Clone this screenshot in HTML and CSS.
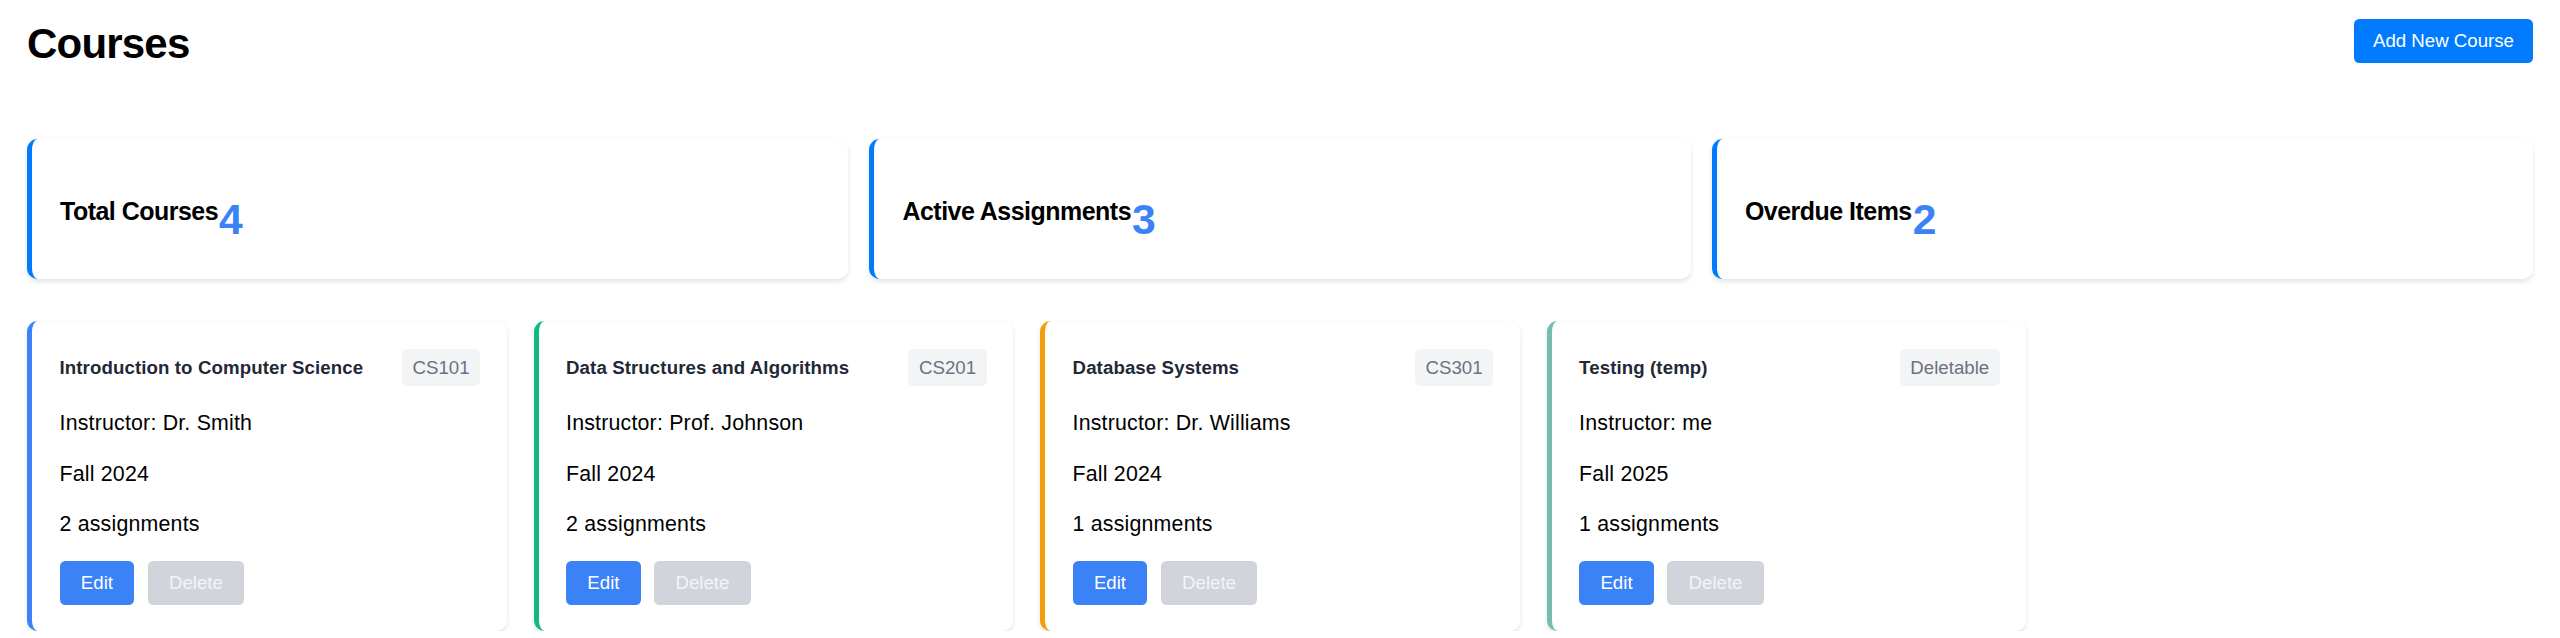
FILE: index.html
```html
<!DOCTYPE html>
<html lang="en">
<head>
<meta charset="utf-8">
<title>Courses</title>
<link rel="stylesheet" href="styles.css">
</head>
<body>
<div class="page">
  <header class="page-header">
    <h1 class="page-title">Courses</h1>
    <button class="btn-primary">Add New Course</button>
  </header>

  <section class="stats">
    <div class="stat-card">
      <h3 class="stat-label">Total Courses</h3>
      <p class="stat-value">4</p>
    </div>
    <div class="stat-card">
      <h3 class="stat-label">Active Assignments</h3>
      <p class="stat-value">3</p>
    </div>
    <div class="stat-card">
      <h3 class="stat-label">Overdue Items</h3>
      <p class="stat-value">2</p>
    </div>
  </section>

  <section class="course-grid">
    <article class="course-card accent-blue">
      <div class="course-head">
        <h4 class="course-title">Introduction to Computer Science</h4>
        <span class="course-code">CS101</span>
      </div>
      <p class="course-line">Instructor: Dr. Smith</p>
      <p class="course-line">Fall 2024</p>
      <p class="course-line">2 assignments</p>
      <div class="course-actions">
        <button class="btn-edit">Edit</button>
        <button class="btn-delete" disabled>Delete</button>
      </div>
    </article>

    <article class="course-card accent-green">
      <div class="course-head">
        <h4 class="course-title">Data Structures and Algorithms</h4>
        <span class="course-code">CS201</span>
      </div>
      <p class="course-line">Instructor: Prof. Johnson</p>
      <p class="course-line">Fall 2024</p>
      <p class="course-line">2 assignments</p>
      <div class="course-actions">
        <button class="btn-edit">Edit</button>
        <button class="btn-delete" disabled>Delete</button>
      </div>
    </article>

    <article class="course-card accent-amber">
      <div class="course-head">
        <h4 class="course-title">Database Systems</h4>
        <span class="course-code">CS301</span>
      </div>
      <p class="course-line">Instructor: Dr. Williams</p>
      <p class="course-line">Fall 2024</p>
      <p class="course-line">1 assignments</p>
      <div class="course-actions">
        <button class="btn-edit">Edit</button>
        <button class="btn-delete" disabled>Delete</button>
      </div>
    </article>

    <article class="course-card accent-teal">
      <div class="course-head">
        <h4 class="course-title">Testing (temp)</h4>
        <span class="course-code">Deletable</span>
      </div>
      <p class="course-line">Instructor: me</p>
      <p class="course-line">Fall 2025</p>
      <p class="course-line">1 assignments</p>
      <div class="course-actions">
        <button class="btn-edit">Edit</button>
        <button class="btn-delete" disabled>Delete</button>
      </div>
    </article>
  </section>
</div>
</body>
</html>
```

FILE: styles.css
```css
* {
  box-sizing: border-box;
}

html, body {
  margin: 0;
  padding: 0;
  background: #ffffff;
}

body {
  font-family: "Liberation Sans", Arial, sans-serif;
  color: #000000;
}

.page {
  padding: 19px 27px 0 27px;
}

.page-header {
  display: flex;
  justify-content: space-between;
  align-items: center;
  height: 44px;
}

.page-title {
  margin: 6px 0 0 0;
  font-size: 42px;
  font-weight: 700;
  line-height: 50px;
  letter-spacing: -0.8px;
}

.btn-primary {
  font-family: inherit;
  font-size: 18.67px;
  line-height: 22px;
  height: 44px;
  padding: 0 19px;
  color: #ffffff;
  background: #007bff;
  border: none;
  border-radius: 5.33px;
}

.stats {
  display: grid;
  grid-template-columns: repeat(3, 1fr);
  gap: 21.33px;
  margin-top: 76px;
}

.stat-card {
  height: 140px;
  display: flex;
  align-items: flex-start;
  padding: 57px 26.67px 0 28px;
  background: #ffffff;
  border-left: 5.33px solid #007bff;
  border-radius: 10.67px;
  box-shadow: 0 2.67px 5.33px rgba(0, 0, 0, 0.1);
}

.stat-label {
  margin: 0;
  font-size: 24.96px;
  font-weight: 700;
  line-height: 30px;
  letter-spacing: -0.5px;
}

.stat-value {
  margin: -2px 0 0 1px;
  font-size: 42.67px;
  font-weight: 700;
  line-height: 50px;
  color: #3b82f6;
}

.course-grid {
  display: grid;
  grid-template-columns: repeat(5, 1fr);
  gap: 26.67px;
  margin-top: 42px;
}

.course-card {
  background: #ffffff;
  border-left: 5.33px solid #3b82f6;
  border-radius: 10.67px;
  box-shadow: 0 2.67px 5.33px rgba(0, 0, 0, 0.1);
  padding: 27.5px 26.67px 26px 27.5px;
}

.accent-blue { border-left-color: #3b82f6; }
.accent-green { border-left-color: #10b981; }
.accent-amber { border-left-color: #f59e0b; }
.accent-teal { border-left-color: #76bdb0; }

.course-head {
  display: flex;
  justify-content: space-between;
  align-items: center;
  height: 37px;
  margin-bottom: 23.5px;
}

.course-title {
  margin: 2px 0 0 0;
  font-size: 18.67px;
  font-weight: 700;
  color: #1f2937;
  letter-spacing: 0.1px;
}

.course-code {
  font-size: 18.67px;
  line-height: 25px;
  padding: 6px 10.67px;
  background: #f3f4f6;
  color: #6b7280;
  border-radius: 5.33px;
}

.course-line {
  margin: 21.33px 0;
  font-size: 21.33px;
  line-height: 29.33px;
  letter-spacing: 0.2px;
  color: #000000;
}

.course-actions {
  display: flex;
  gap: 13.33px;
}

.btn-edit,
.btn-delete {
  font-family: inherit;
  font-size: 18.67px;
  line-height: 22px;
  height: 43.67px;
  padding: 0 21.33px;
  border: none;
  border-radius: 5.33px;
  color: #ffffff;
}

.btn-edit {
  background: #3b82f6;
}

.btn-delete {
  background: #d1d5db;
  color: #f3f4f6;
}
```
